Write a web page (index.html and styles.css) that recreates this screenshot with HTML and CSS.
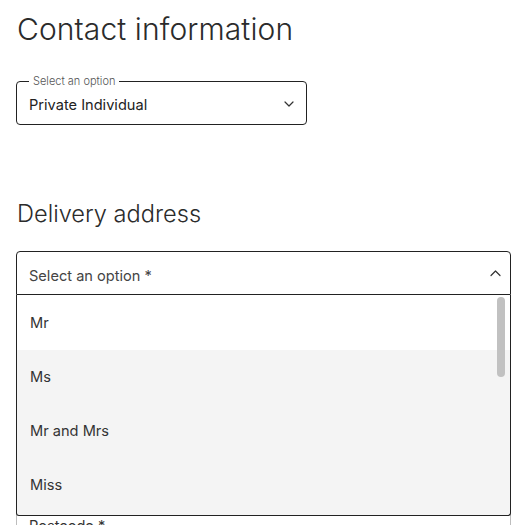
FILE: index.html
```html
<!DOCTYPE html>
<html lang="en">
<head>
<meta charset="utf-8">
<title>Contact information</title>
<link rel="stylesheet" href="styles.css">
</head>
<body>
<main class="page">
  <h1 class="title">Contact information</h1>

  <div class="field field--small">
    <span class="field__label">Select an option</span>
    <span class="field__value">Private Individual</span>
    <svg class="chev" width="10" height="6" viewBox="0 0 10 6" aria-hidden="true"><path d="M1 1l4 4 4-4" fill="none" stroke="#333" stroke-width="1.2" stroke-linecap="round" stroke-linejoin="round"/></svg>
  </div>

  <h2 class="subtitle">Delivery address</h2>

  <div class="combo">
    <div class="combo__head">
      <span class="combo__placeholder">Select an option *</span>
      <svg class="chev" width="11" height="7" viewBox="0 0 11 7" aria-hidden="true"><path d="M1 5.5l4.5-4.5 4.5 4.5" fill="none" stroke="#333" stroke-width="1.2" stroke-linecap="round" stroke-linejoin="round"/></svg>
    </div>
    <ul class="combo__list">
      <li class="option">Mr</li>
      <li class="option">Ms</li>
      <li class="option">Mr and Mrs</li>
      <li class="option">Miss</li>
      <li class="thumb" aria-hidden="true"></li>
    </ul>
  </div>

  <div class="field field--wide">
    <span class="field__value field__value--top">Postcode *</span>
  </div>
</main>
</body>
</html>
```

FILE: styles.css
```css
* { box-sizing: border-box; }

html, body {
  margin: 0;
  padding: 0;
  background: #fff;
}

body {
  font-family: Inter, "Liberation Sans", sans-serif;
  color: #222;
  overflow: hidden;
  height: 525px;
}

.page {
  padding: 11px 12px 0 16px;
}

.title {
  margin: 0 0 0 1px;
  font-size: 30px;
  line-height: 36px;
  font-weight: 300;
  color: #2b2b2b;
  letter-spacing: 0.1px;
}

.field {
  position: relative;
  display: flex;
  align-items: center;
  border: 1px solid #222;
  border-radius: 4px;
  height: 44px;
  padding: 0 12px;
}

.field--small {
  width: 291px;
  margin-top: 34px;
  padding-top: 4px;
}

.field__label {
  position: absolute;
  top: -7px;
  left: 12px;
  padding: 0 4px;
  background: #fff;
  font-size: 11px;
  line-height: 12px;
  color: #555;
  font-weight: 300;
}

.field__value {
  flex: 1;
  font-size: 14.6px;
  line-height: 20px;
  color: #222;
}

.chev {
  display: block;
  flex: none;
}

.field--small .chev {
  margin-top: -2px;
}

.subtitle {
  margin: 74px 0 0 1px;
  font-size: 23.6px;
  line-height: 29px;
  font-weight: 300;
  color: #2b2b2b;
}

.combo {
  position: relative;
  margin-top: 23px;
  z-index: 2;
}

.combo__head {
  display: flex;
  align-items: center;
  height: 44px;
  padding: 5px 9px 0 12px;
  border: 1px solid #222;
  border-radius: 4px 4px 0 0;
  background: #fff;
}

.combo__head .chev {
  margin-top: -4px;
}

.combo__placeholder {
  flex: 1;
  font-size: 14.6px;
  line-height: 20px;
  color: #444;
}

.combo__list {
  position: absolute;
  top: 100%;
  left: 0;
  right: 0;
  margin: 0;
  padding: 1px 0 3px;
  list-style: none;
  border: 1px solid #222;
  border-top: 0;
  border-radius: 0 0 3px 3px;
  background: #f4f4f4;
  overflow: hidden;
}

.option {
  height: 54px;
  display: flex;
  align-items: center;
  padding: 0 13px;
  font-size: 14.6px;
  color: #333;
  background: #f4f4f4;
}

.option:first-child {
  background: #fff;
  margin-top: -1px;
  height: 55px;
  padding-top: 1px;
}

.thumb {
  position: absolute;
  top: 2px;
  right: 5px;
  width: 8px;
  height: 80px;
  border-radius: 4px;
  background: #c1c1c1;
}

.field--wide {
  margin-top: 216px;
  border-color: #bdbdbd;
  border-radius: 4px;
  align-items: flex-start;
  padding-top: 4px;
}

.field__value--top {
  color: #333;
}
```
